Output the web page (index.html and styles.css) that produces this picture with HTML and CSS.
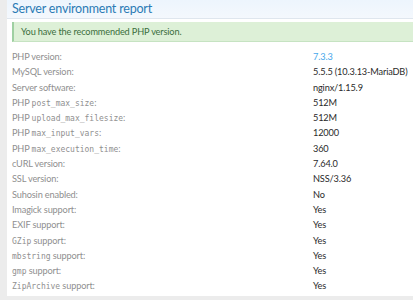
FILE: index.html
```html
<!DOCTYPE html>
<html lang="en">
<head>
    <meta charset="UTF-8">
    <title>Server environment report</title>
    <link rel="stylesheet" href="styles.css">
</head>
<body>
    <div class="block">
        <h2 class="block-header">Server environment report</h2>
        <div class="block-body">
            <div class="success">You have the recommended PHP version.</div>

            <dl class="pairs">
                <dt>PHP version:</dt>
                <dd><a href="#">7.3.3</a></dd>
                <dt>MySQL version:</dt>
                <dd>5.5.5 (10.3.13-MariaDB)</dd>
                <dt>Server software:</dt>
                <dd>nginx/1.15.9</dd>
                <dt>PHP <code>post_max_size</code>:</dt>
                <dd>512M</dd>
                <dt>PHP <code>upload_max_filesize</code>:</dt>
                <dd>512M</dd>
                <dt>PHP <code>max_input_vars</code>:</dt>
                <dd>12000</dd>
                <dt>PHP <code>max_execution_time</code>:</dt>
                <dd>360</dd>
                <dt>cURL version:</dt>
                <dd>7.64.0</dd>
                <dt>SSL version:</dt>
                <dd>NSS/3.36</dd>
                <dt>Suhosin enabled:</dt>
                <dd>No</dd>
                <dt>Imagick support:</dt>
                <dd>Yes</dd>
                <dt>EXIF support:</dt>
                <dd>Yes</dd>
                <dt><code>GZip</code> support:</dt>
                <dd>Yes</dd>
                <dt><code>mbstring</code> support:</dt>
                <dd>Yes</dd>
                <dt><code>gmp</code> support:</dt>
                <dd>Yes</dd>
                <dt><code>ZipArchive</code> support:</dt>
                <dd>Yes</dd>
            </dl>
        </div>
    </div>
</body>
</html>
```

FILE: styles.css
```css
body {
    margin: 0;
    padding: 0 0 4px 7px;
    background-color: #ececec;
    font-family: Lato, "Liberation Sans", sans-serif;
    overflow: hidden;
}

.block {
    background-color: #fff;
}

/* 标题栏 */
.block-header {
    margin: 0;
    height: 18px;
    padding: 0 5px;
    font-size: 12.5px;
    font-weight: normal;
    letter-spacing: -0.2px;
    line-height: 18px;
    color: #2b7bb5;
    background: linear-gradient(to bottom, #edf5fd, #f4f8fd);
    border-bottom: 1px solid #dfe6ee;
}

.block-body {
    padding: 3px 0 2px 5px;
}

/* 提示框 */
.success {
    height: 19px;
    padding-left: 7px;
    font-size: 9.2px;
    letter-spacing: -0.15px;
    line-height: 19px;
    color: #3b6e3d;
    background-color: #ddf0d7;
    border-left: 2px solid #9fd0a2;
    border-bottom: 1px solid #c6e3c2;
}

/* 信息列表 */
.pairs {
    display: grid;
    grid-template-columns: 301px 1fr;
    grid-auto-rows: 15.3px;
    margin: 7px 0 0;
    font-size: 9.2px;
    letter-spacing: -0.15px;
    line-height: 15.3px;
}
.pairs dt {
    color: #8f8f8f;
}
.pairs dd {
    margin: 0;
    color: #2a2a2a;
    white-space: nowrap;
}
.pairs a {
    color: #47a7eb;
    text-decoration: none;
}
.pairs code {
    font-family: "DejaVu Sans Mono", monospace;
    font-size: 8px;
    letter-spacing: 0;
    line-height: 1;
}
```
